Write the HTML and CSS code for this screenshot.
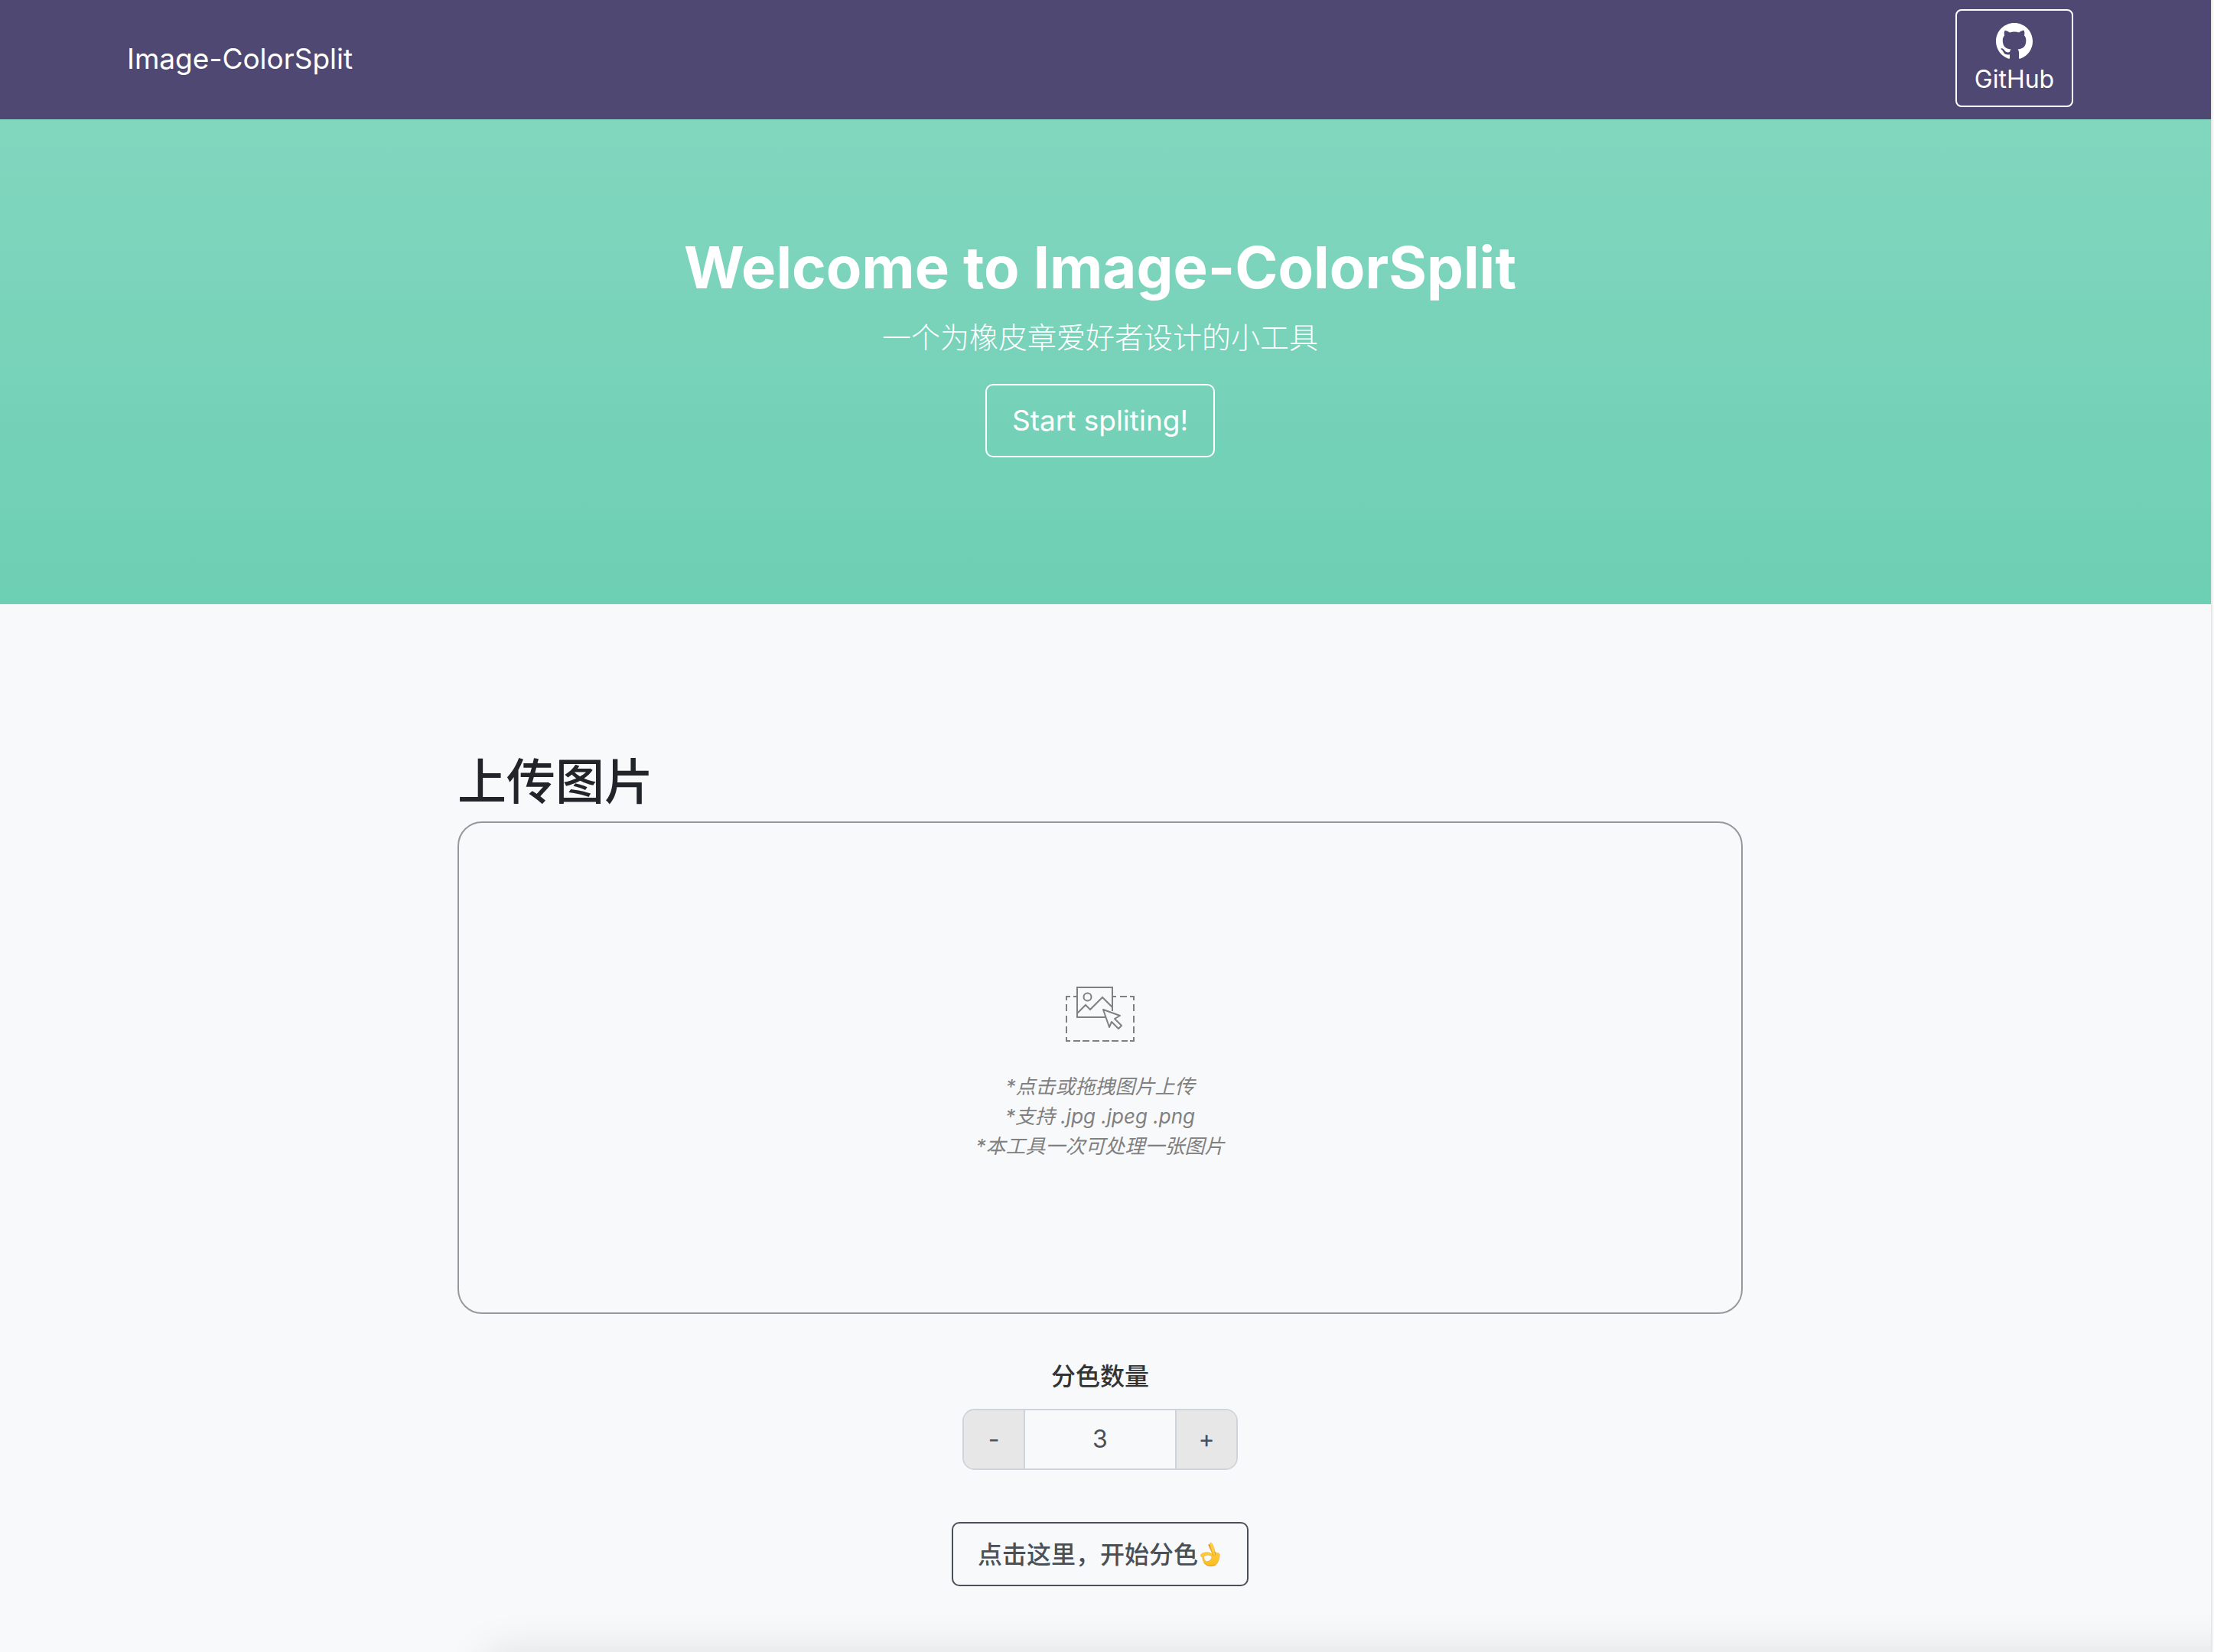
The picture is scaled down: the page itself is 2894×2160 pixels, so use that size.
FILE: index.html
```html
<!DOCTYPE html>
<html lang="zh-CN">
<head>
<meta charset="utf-8">
<meta name="viewport" content="width=device-width, initial-scale=1">
<title>Image-ColorSplit</title>
<link rel="stylesheet" href="styles.css">
</head>
<body>
<div class="page">
  <header class="navbar">
    <a class="brand" href="#">Image-ColorSplit</a>
    <a class="github" href="#github">
      <svg class="github-logo" viewBox="0 0 16 16" aria-hidden="true"><path fill="currentColor" d="M8 0C3.58 0 0 3.58 0 8c0 3.54 2.29 6.53 5.47 7.59.4.07.55-.17.55-.38 0-.19-.01-.82-.01-1.49-2.01.37-2.53-.49-2.69-.94-.09-.23-.48-.94-.82-1.13-.28-.15-.68-.52-.01-.53.63-.01 1.08.58 1.23.82.72 1.21 1.87.87 2.33.66.07-.52.28-.87.51-1.07-1.78-.2-3.64-.89-3.64-3.95 0-.87.31-1.59.82-2.15-.08-.2-.36-1.02.08-2.12 0 0 .67-.21 2.2.82.64-.18 1.32-.27 2-.27s1.36.09 2 .27c1.53-1.04 2.2-.82 2.2-.82.44 1.1.16 1.92.08 2.12.51.56.82 1.27.82 2.15 0 3.07-1.87 3.75-3.65 3.95.29.25.54.73.54 1.48 0 1.07-.01 1.93-.01 2.2 0 .21.15.46.55.38A8.01 8.01 0 0 0 16 8c0-4.42-3.58-8-8-8z"/></svg>
      <span>GitHub</span>
    </a>
  </header>

  <section class="hero">
    <h1 class="hero-title">Welcome to Image-ColorSplit</h1>
    <p class="hero-lead">一个为橡皮章爱好者设计的小工具</p>
    <button class="hero-button" type="button">Start spliting!</button>
  </section>

  <main class="workspace">
    <div class="content">
      <h2 class="upload-title">上传图片</h2>
      <button class="dropzone" type="button">
        <svg class="drop-icon" viewBox="0 0 92 74" fill="none" stroke="currentColor" stroke-width="2" aria-hidden="true">
          <path d="M15 14h-4M7 14H2v5M2 24v9M2 39v9M2 53v9M2 67v5h5M11 72h9M23 72h9M36 72h9M49 72h9M61 72h9M74 72h8M85 72h5v-5M90 62v-9M90 48v-9M90 33v-9M90 19v-5h-5M81 14h-9M67 14h-4"/>
          <path d="M54 41H16V2h46v31"/>
          <circle cx="29.500" cy="14.500" r="5"/>
          <path d="M16 36l11-11 6 6 16-16 13 13"/>
          <path stroke-linejoin="round" d="M50 31l22 8-7 4 9 9-4 4-9-9-3 7z"/>
        </svg>
        <span class="drop-hint">*点击或拖拽图片上传<br>*支持 .jpg .jpeg .png<br>*本工具一次可处理一张图片</span>
      </button>

      <form class="controls">
        <label class="count-label" for="count">分色数量</label>
        <div class="stepper">
          <button class="step" type="button" aria-label="减少">-</button>
          <input class="count" id="count" type="text" inputmode="numeric" value="3">
          <button class="step" type="button" aria-label="增加">+</button>
        </div>
        <button class="split-button" type="button">
          <span>点击这里，开始分色</span>
          <svg class="ok-hand" viewBox="-3 0 32 34" aria-hidden="true">
            <defs>
              <linearGradient id="skin" x1="0" y1="0" x2="0" y2="1"><stop offset="0" stop-color="#ffd548"/><stop offset="1" stop-color="#fcbd22"/></linearGradient>
            </defs>
            <path fill="#e09a22" d="M10.300 4c.8-1.500 2.200-1 3 .5l5.700 10-3 2z"/>
            <path fill="url(#skin)" stroke="#e7a52a" stroke-width=".5" fill-rule="evenodd" d="M.5 17.500C1 14.500 7 13.200 11 14c2 .3 3.500 1.200 4.800 2.200L12.500 3c-.4-1.800 1.700-2.700 2.900-.8 2 3.300 3.200 7.800 3.600 11 1.300.2 2 .7 2.500 1.500 2.200-.5 4 .5 3.800 2.600-.3 3.500-1 7.500-3.500 11.200C18.500 33 9 33 5 27.500 3.300 25 2.800 21.500 2.300 19.600 1 19.500.2 18.800.5 17.500zM4.500 19.200c.3 3 1.500 6.300 4 6.400 3.200 0 6.600-2.800 6.300-5.600-.3-3.100-6.500-3.800-10.300-.8z"/>
            <path fill="none" stroke="#dd9117" stroke-width=".8" stroke-linecap="round" d="M15.800 16.200l2 2.300M19 13.200l1 4M5 27.500c3.500 4.500 10 5 14 2.500"/>
          </svg>
        </button>
      </form>
    </div>
  </main>

  <div class="panel-edge"><div class="panel"></div></div>
</div>
</body>
</html>
```
FILE: styles.css
```css
* {
  box-sizing: border-box;
}

body {
  margin: 0;
  background: #fafafa;
  color: #212529;
  font-family: Inter, "Noto Sans CJK SC", sans-serif;
  font-size: 32px;
  line-height: 48px;
}

button,
input {
  margin: 0;
  padding: 0;
  border: 0;
  background: none;
  color: inherit;
  font: inherit;
}

button {
  cursor: pointer;
}

a {
  color: inherit;
  text-decoration: none;
}

.page {
  display: flex;
  flex-direction: column;
  min-height: 100vh;
  margin-right: 2px;
  border-right: 2px solid #e8e8e8;
  background: #f8f9fb;
}

.navbar {
  display: flex;
  align-items: center;
  justify-content: space-between;
  padding: 12px 180px 16px 166px;
  background: #4f4872;
  color: #fff;
}

.brand {
  padding-top: 2px;
  font-size: 37px;
}

.github {
  display: flex;
  flex-direction: column;
  align-items: center;
  gap: 2px;
  width: 154px;
  padding: 16px 0 10px;
  border: 2px solid #fff;
  border-radius: 8px;
}

.github-logo {
  width: 48px;
  height: 48px;
}

.hero {
  display: flex;
  flex-direction: column;
  align-items: center;
  padding: 145px 14px 192px 0;
  background: linear-gradient(#81d6be, #6dcfb4);
  color: #fff;
  text-align: center;
}

.hero-title {
  margin: 0 0 16px;
  font-size: 76px;
  font-weight: 700;
  line-height: 96px;
}

.hero-lead {
  margin: 0 0 33px;
  font-size: 38px;
  font-weight: 300;
  line-height: 56px;
}

.hero-button {
  width: 300px;
  height: 96px;
  border: 2px solid #fff;
  border-radius: 10px;
  font-size: 37px;
}

.workspace {
  padding: 194px 14px 0 0;
}

.content {
  display: flex;
  flex-direction: column;
  max-width: 1680px;
  margin: 0 auto;
}

.upload-title {
  margin: 0 0 14px;
  font-size: 64px;
  font-weight: 500;
  line-height: 76px;
}

.dropzone {
  display: flex;
  flex-direction: column;
  align-items: center;
  padding: 213px 32px 198px;
  border: 2px solid #97989b;
  border-radius: 32px;
  color: #808080;
}

.drop-icon {
  width: 92px;
  height: 74px;
  margin-bottom: 38px;
}

.drop-hint {
  font-size: 26px;
  font-style: italic;
  line-height: 39px;
}

.controls {
  display: flex;
  flex-direction: column;
  align-items: center;
  padding-top: 58px;
}

.count-label {
  margin-bottom: 18px;
  color: #333;
  font-weight: 500;
}

.stepper {
  display: flex;
  width: 360px;
  height: 80px;
  margin-bottom: 68px;
  overflow: hidden;
  border: 2px solid #ced4da;
  border-radius: 16px;
  color: #495057;
}

.step {
  width: 78px;
  flex: none;
  background: #e7e7e7;
}

.count {
  flex: 1;
  min-width: 0;
  border: solid #ced4da;
  border-width: 0 2px;
  text-align: center;
}

.split-button {
  display: flex;
  align-items: center;
  padding: 17px 32px 15px;
  border: 2px solid #495057;
  border-radius: 10px;
  color: #495057;
  font-weight: 500;
}

.ok-hand {
  width: 32px;
  height: 34px;
}

/* Top shadow of the result panel that follows the controls */
.panel-edge {
  height: 86px;
  padding-top: 86px;
  overflow: hidden;
}

.panel {
  height: 200px;
  margin-left: 630px;
  margin-right: -100px;
  border-radius: 32px;
  box-shadow: 0 0 56px rgba(0, 0, 0, 0.11);
}
```
